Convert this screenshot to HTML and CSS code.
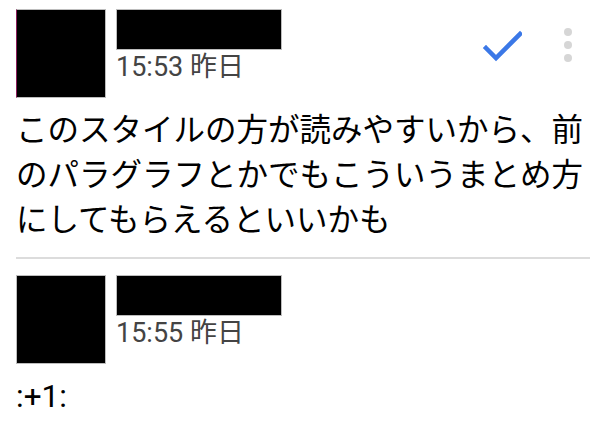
FILE: index.html
```html
<!DOCTYPE html>
<html lang="ja">

<head>
    <meta charset="UTF-8">
    <meta name="viewport" content="width=device-width, initial-scale=1.0">
    <title>Messages</title>
    <link rel="stylesheet" href="styles.css">
</head>

<body>
    <div class="thread">
        <!-- First message -->
        <div class="message">
            <div class="header">
                <div class="avatar avatar-mark"></div>
                <div class="meta">
                    <div class="name"></div>
                    <div class="time">15:53 昨日</div>
                </div>
                <div class="actions">
                    <svg class="check" width="40" height="32" viewBox="0 0 40 32">
                        <path d="M4 18 L14 28 L38 4" fill="none" stroke="#3b78e7" stroke-width="4.5" stroke-linecap="square" />
                    </svg>
                    <div class="more">
                        <span></span>
                        <span></span>
                        <span></span>
                    </div>
                </div>
            </div>
            <p class="body">このスタイルの方が読みやすいから、前のパラグラフとかでもこういうまとめ方にしてもらえるといいかも</p>
        </div>

        <div class="divider"></div>

        <!-- Second message -->
        <div class="message">
            <div class="header">
                <div class="avatar"></div>
                <div class="meta">
                    <div class="name"></div>
                    <div class="time">15:55 昨日</div>
                </div>
            </div>
            <p class="body">:+1:</p>
        </div>
    </div>
</body>

</html>
```

FILE: styles.css
```css
* {
    margin: 0;
    padding: 0;
    box-sizing: border-box;
}

body {
    font-family: Roboto, "Noto Sans CJK JP", sans-serif;
    background-color: #ffffff;
    color: #000000;
    width: 606px;
    height: 430px;
    overflow: hidden;
}

.thread {
    padding: 9px 16px 0 16px;
}

.header {
    display: flex;
    align-items: flex-start;
}

.avatar {
    width: 90px;
    height: 89px;
    background: #000000;
    border: 1px solid #bdbdbd;
    flex-shrink: 0;
}

.avatar-mark {
    border-left: 1px solid #8a1d5a;
}

.meta {
    margin-left: 10px;
}

.name {
    width: 166px;
    height: 41px;
    background: #000000;
    border: 1px solid #bdbdbd;
}

.time {
    font-size: 27px;
    color: #444444;
    margin-top: 1px;
    line-height: 32px;
}

.actions {
    margin-left: auto;
    display: flex;
    align-items: flex-start;
}

.check {
    display: block;
    margin-top: 21px;
    margin-right: 42px;
}

.more {
    display: flex;
    flex-direction: column;
    gap: 5px;
    margin-top: 19px;
    margin-right: 18px;
}

.more span {
    display: block;
    width: 8px;
    height: 8px;
    border-radius: 50%;
    background: #d6d6d6;
}

.body {
    font-size: 31.5px;
    line-height: 45px;
    margin-top: 10px;
    padding-bottom: 14px;
}

.divider {
    height: 2px;
    background: #dcdcdc;
    margin: 0 0 16px 0;
}
```
